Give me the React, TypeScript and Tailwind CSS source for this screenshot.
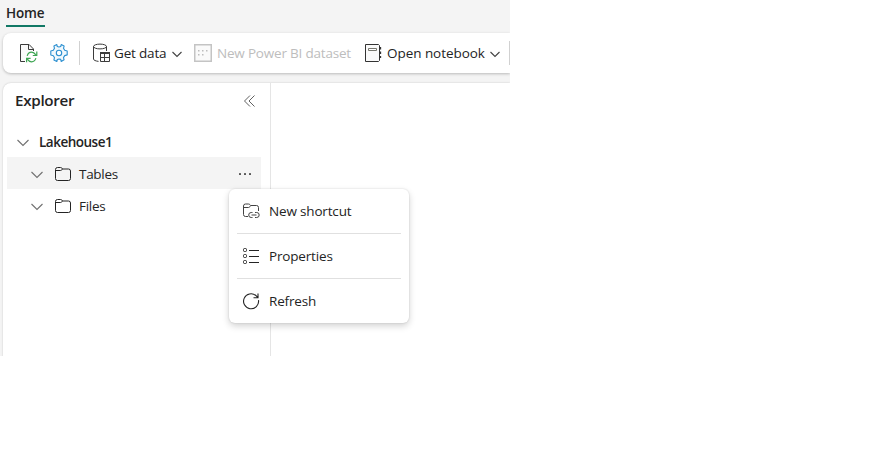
import type { ReactNode } from 'react';

type IconProps = { className?: string };

const Chevron = ({ className = '' }: IconProps) => (
  <svg className={`shrink-0 ${className}`} width="12" height="8" viewBox="0 0 12 8" fill="none" stroke="currentColor" strokeWidth="1.1">
    <path d="M.5 1 6 6.5 11.5 1" />
  </svg>
);

const SmallChevron = ({ className = '' }: IconProps) => (
  <svg className={`shrink-0 text-[#424242] ${className}`} width="10" height="7" viewBox="0 0 10 7" fill="none" stroke="currentColor" strokeWidth="1.1">
    <path d="M.5 1 5 5.5 9.5 1" />
  </svg>
);

const RefreshFile = () => (
  <svg className="shrink-0" width="18" height="20" viewBox="0 0 18 20" fill="none">
    <path d="M5 18.5H.5V1.5h8.600l4.400 4.500v2" fill="#fafafa" stroke="#3b3b3b" />
    <path d="M8.500 1.500v5h5" stroke="#3b3b3b" />
    <path d="M7.200 12.800c.7-2.300 2.200-3.700 4.300-3.700 1.900 0 3.200 1 4.300 2.800M16.800 8.500V12.500h-4M15.900 15.200c-.7 2.300-2.200 3.600-4.300 3.600-1.900 0-3.200-1-4.300-2.700M6.600 19.300v-4h4" stroke="#3da552" strokeWidth="1.200" />
  </svg>
);

const Gear = () => (
  <svg className="shrink-0" width="18" height="18" viewBox="0 0 18 18" fill="none" stroke="#2b8fd0" strokeWidth="1.100" strokeLinejoin="round">
    <path d="M6.800.6 7.300 2.500 9 3l1.700-.5.500-1.900 2.900 1.500-.6 2.200 1.200 2 2.500.7v3.900l-2.500.7-1.200 2 .6 2.200-2.900 1.600-.5-2L9 15l-1.700.5-.5 2-2.900-1.600.6-2.200-1.200-2-2.500-.7V7l2.500-.7 1.200-2-.6-2.200z" fill="#f0f8fd" />
    <circle cx="9" cy="9" r="2.700" fill="white" />
  </svg>
);

const DatabaseTable = () => (
  <svg className="shrink-0" width="18" height="20" viewBox="0 0 18 20" fill="none" stroke="#3b3b3b">
    <path d="M.5 3.500v12.500c0 1.200 2 2 5 2.400M13.500 3.500v4.500" />
    <ellipse cx="7" cy="3.500" rx="6.500" ry="2.400" />
    <path d="M7.500 9.500h9v9h-9z" fill="#fafafa" />
    <path d="M7 10h10" strokeWidth="2" />
    <path d="M7.500 14.500h9M11.500 10v8.500" />
  </svg>
);

const Dataset = () => (
  <svg className="shrink-0" width="18" height="18" viewBox="0 0 18 18" fill="none">
    <path d="M.750.750h16.500v16.500H.750z" fill="#fafafa" stroke="#c4c4c4" strokeWidth="1.500" />
    <path d="M4 6h1.500v1.500H4zM8 6h1.500v1.500H8zM12 6h1.500v1.500H12zM4 10h1.500v1.500H4zM8 10h1.500v1.500H8z" fill="#bdbdbd" />
  </svg>
);

const Notebook = () => (
  <svg className="shrink-0" width="17" height="18" viewBox="0 0 17 18" fill="none">
    <path d="M.5.5h13l1 1v15l-1 1H.5z" fill="#fafafa" stroke="#333" />
    <path d="M3.500 4.500h8v2h-8z" fill="white" stroke="#77776f" />
    <path d="M15.500 3v2.500M15.500 7.500v2.500M15.500 12v2" stroke="#333" strokeWidth="1.300" />
  </svg>
);

const Folder = () => (
  <svg className="shrink-0" width="16" height="14" viewBox="0 0 16 14" fill="none" stroke="#242424">
    <path d="M.500 2.500q0-2 2-2h3q.8 0 1.400.6l.8.900h5.800q2 0 2 2v7.500q0 2-2 2h-11q-2 0-2-2z" />
    <path d="M.5 3.500h5q.8 0 1.300-.6l.9-.9" />
  </svg>
);

const ShortcutFolder = () => (
  <svg className="shrink-0" width="17" height="16" viewBox="0 0 17 16" fill="none" stroke="#424242">
    <path d="M5 13.500H2.500q-2 0-2-2v-8.500q0-2 2-2h3q.8 0 1.400.6l.8.900h5.800q2 0 2 2V8M.5 4.500h5q.8 0 1.300-.7l.9-1.300" />
    <path d="M9.500 9.500H8.200a2.500 2.500 0 0 0 0 5h1.300M12 9.500h1.700a2.500 2.500 0 0 1 0 5H12M8.500 12h5" />
  </svg>
);

const Properties = () => (
  <svg className="shrink-0" width="17" height="16" viewBox="0 0 17 16" fill="none" stroke="#242424">
    <path d="M6 2.500h10M6 8.500h10M6 14.500h10" />
    <rect x=".5" y=".5" width="3" height="3" rx="1" />
    <rect x=".5" y="6.500" width="3" height="3" rx="1" />
    <rect x=".5" y="12.500" width="3" height="3" rx="1" />
  </svg>
);

const Refresh = () => (
  <svg className="shrink-0" width="17" height="17" viewBox="0 0 17 17" fill="none" stroke="#242424" strokeWidth="1.100">
    <path d="M15.500 7.200A7.500 7.500 0 1 1 13 2.600l2 1.900M15 .5v4.300h-4.500" />
  </svg>
);

function TreeRow({ label, selected }: { label: string; selected?: boolean }) {
  return (
    <div className={`ml-1 flex h-8 w-[254px] items-center pt-0.5 pl-6 ${selected ? 'bg-[#f4f4f4]' : ''}`}>
      <Chevron className="mt-0.5 text-[#707070]" />
      <span className="ml-3 flex">
        <Folder />
      </span>
      <span className="ml-2 flex-1 tracking-[-0.3px]">{label}</span>
      {selected && (
        <span className="mr-2.5 flex gap-[3px]">
          <i className="size-0.5 rounded-[0.5px] bg-[#555]" />
          <i className="size-0.5 rounded-[0.5px] bg-[#555]" />
          <i className="size-0.5 rounded-[0.5px] bg-[#555]" />
        </span>
      )}
    </div>
  );
}

function MenuItem({ icon, children }: { icon: ReactNode; children: ReactNode }) {
  return (
    <div className="flex h-8 items-center pl-1.5">
      <span className="flex w-[26px] items-center">{icon}</span>
      <span>{children}</span>
    </div>
  );
}

export default function App() {
  return (
    <div className="h-[451px] w-[877px] overflow-hidden bg-white font-['Open_Sans','Noto_Sans',sans-serif] text-[13.5px] leading-5 tracking-[-0.17px] whitespace-nowrap text-[#242424]">
      <div className="relative flex h-[356px] w-[510px] flex-col overflow-hidden bg-[#f4f4f4] pl-[3px]">
        <header className="ml-[3px] flex h-[33px] shrink-0 items-start pt-[3px]">
          <div className="h-6 w-[39px] border-b-2 border-[#117865] font-semibold tracking-[-0.2px]">Home</div>
        </header>

        <div className="flex h-10 shrink-0 items-center rounded-l-lg bg-white pl-[17px] shadow-[0_1px_3px_rgba(0,0,0,0.24)]">
          <RefreshFile />
          <span className="ml-3 flex"><Gear /></span>
          <span className="ml-[11px] h-6 w-px bg-[#d1d1d1]" />
          <span className="ml-[13px] flex"><DatabaseTable /></span>
          <span className="ml-[3px] w-[58px]">Get data</span>
          <SmallChevron className="mt-0.5" />
          <span className="ml-3 flex"><Dataset /></span>
          <span className="ml-[5px] w-[148px] tracking-[-0.2px] text-[#bdbdbd]">New Power BI dataset</span>
          <Notebook />
          <span className="ml-[5px] w-[103px] tracking-[-0.05px]">Open notebook</span>
          <SmallChevron className="mt-0.5" />
          <span className="ml-[9px] h-6 w-px bg-[#d1d1d1]" />
        </div>

        <div className="mt-2.5 flex h-[280px] shrink-0 rounded-tl-lg bg-white shadow-[0_0_2px_rgba(0,0,0,0.2)]">
          <aside className="w-[268px] border-r border-[#e5e5e5]">
            <div className="flex h-9 items-center justify-between pr-[15px] pl-3">
              <h2 className="pb-0.5 text-[15.2px] font-semibold tracking-[-0.3px]">Explorer</h2>
              <svg width="11" height="12" viewBox="0 0 11 12" fill="none" stroke="#616161"><path d="M6 .5.500 6 6 11.500M10.500.5 5 6l5.500 5.500" /></svg>
            </div>
            <div className="mt-1.5 flex h-8 items-center pt-0.5 pl-3.5 font-semibold">
              <Chevron className="mt-0.5 text-[#707070]" />
              <span className="ml-2.5 tracking-[-0.5px]">Lakehouse1</span>
            </div>
            <TreeRow label="Tables" selected />
            <TreeRow label="Files" />
          </aside>
        </div>

        <div className="absolute top-[189px] left-[229px] h-[134px] w-[180px] rounded-md bg-white px-2 pt-1.5 shadow-[0_3px_7px_rgba(0,0,0,0.18),0_0_2px_rgba(0,0,0,0.14)]">
          <MenuItem icon={<ShortcutFolder />}>New shortcut</MenuItem>
          <hr className="my-1.5 border-[#e0e0e0]" />
          <MenuItem icon={<Properties />}>Properties</MenuItem>
          <hr className="my-1.5 border-[#e0e0e0]" />
          <MenuItem icon={<Refresh />}>Refresh</MenuItem>
        </div>
      </div>
    </div>
  );
}
